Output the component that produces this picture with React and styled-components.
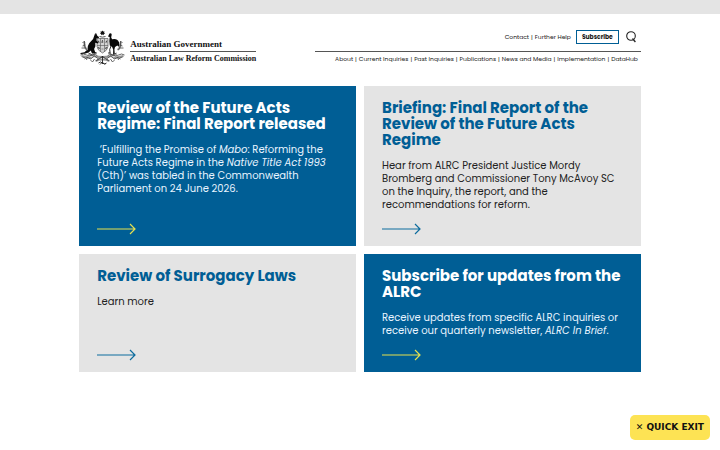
import styled, { createGlobalStyle } from "styled-components";

const topics = [
  {
    title: "Review of the Future Acts Regime: Final Report released",
    text: (
      <>
        &nbsp;‘Fulfilling the Promise of <em>Mabo</em>: Reforming the Future Acts Regime in the{" "}
        <em>Native Title Act 1993</em> (Cth)’ was tabled in the Commonwealth Parliament on 24 June 2026.
      </>
    ),
    dark: true,
  },
  {
    title: "Briefing: Final Report of the Review of the Future Acts Regime",
    text: "Hear from ALRC President Justice Mordy Bromberg and Commissioner Tony McAvoy SC on the Inquiry, the report, and the recommendations for reform.",
    dark: false,
  },
  {
    title: "Review of Surrogacy Laws",
    text: "Learn more",
    dark: false,
  },
  {
    title: "Subscribe for updates from the ALRC",
    text: (
      <>
        Receive updates from specific ALRC inquiries or receive our quarterly newsletter, <em>ALRC In Brief</em>.
      </>
    ),
    dark: true,
  },
];

const pages = [
  "About",
  "Current Inquiries",
  "Past Inquiries",
  "Publications",
  "News and Media",
  "Implementation",
  "DataHub",
];

const CoatOfArms = () => (
  <svg width="47" height="36" viewBox="0 0 46 36" fill="none" stroke="#111" aria-hidden="true">
    {/* star and wreath */}
    <path d="M23 .5l.7 1.1 1.4-.2-.5 1.3 1 .9-1.3.4-.1 1.2-1.2-.7-1.2.7-.1-1.2-1.3-.4 1-.9-.5-1.3 1.4.2z" fill="#111" stroke="none" />
    <path d="M20 6.5q3 1.2 6 0" strokeWidth="1" stroke="#555" />
    {/* shield */}
    <path d="M17.5 8.5h11v8q-.5 4-5.500 6.500q-5-2.500-5.500-6.500z" strokeWidth=".6" stroke="#444" fill="#d4d4d4" />
    <path d="M17.5 15.5h11M21 8.5v13M25 8.5v13M18 12h2m2 0h2m2 0h2M18 18h2m2 1h2m2-1h2" strokeWidth=".6" stroke="#555" />
    <path d="M18.5 10.5l1 2M23 10l-.5 3M27.5 10.5l-1 2M19 17l1 2M27 17l-1 2" strokeWidth=".8" stroke="#333" />
    {/* kangaroo */}
    <path d="M15.8 2.8l.8 2.2.7-1.9.4 2.600 1.800 1.300-.2 1-2.200.2-.2 2.400 2 2-.5.8-2.600-.7.1 3.600-1.300 2.700 1 3.100 1.800.6-.2.8H12.500l-1.200-3-2.200 2-4 1.300-4.100.1v-.8l4-.9 3-2.900q-.1-3.500 1.700-6l3.900-4.400z" fill="#0a0a0a" stroke="none" />
    {/* emu */}
    <path d="M30 3.6q1.1-1 2 .2.5 1.1-.1 2.300-.7 2 .8 3.200 4.900-1.200 6.800 3l.9 5.200-2.600-1.900-2.300 1.300-.6 2.500.3 3.600 1.500.6v.8h-3.100l.1-5-1.200-2.600-2.200-1.400q-1-4.300-.1-8.500l-1.700-.5z" fill="#0a0a0a" stroke="none" />
    <path d="M31.5 16l-1.3 3.5.4 3.500h-2" strokeWidth=".9" />
    {/* wattle */}
    <g stroke="#999" strokeWidth="2">
      <path d="M5 12q-1 5 3 8M41 12q1 5-3 8M9 24q6 3 14 3t14-3M2 26q5 1 10 2M44 26q-5 1-10 2M16 31q7-3 14 0" />
    </g>
    <g strokeWidth=".8" stroke="#444">
      <path d="M7 20q-3-4-2-9M3 13l2-2m-2 5l3-1m-4 3l4 0M39 20q3-4 2-9M43 13l-2-2m2 5l-3-1m4 3l-4 0" />
      <path d="M1 25q3-2 6 0t6 0 5 1M45 25q-3-2-6 0t-6 0-5 1M5 29q3-3 6 0l4-3 4 3M41 29q-3-3-6 0l-4-3-4 3" />
      <path d="M3 27l3 1m2-1l-1 3m4 0l2 2 2-3m28-2l-3 1m-2-1l1 3m-4 0l-2 2-2-3M9 23l4 2 3-2m21 0l-4 2-3-2" />
    </g>
    <path d="M17 31q1-2 3-2.5t3-2.5q1 2 3 2.5t3 2.5M19 33q2-2 4 0t4 0M23 26v8M20.5 34.5l2-2m3 2l-2-2" strokeWidth=".9" stroke="#222" />
  </svg>
);

const Arrow = () => (
  <svg width="39" height="12" viewBox="0 0 39 12" fill="none" stroke="currentColor" aria-hidden="true">
    <path d="M0 6h38M33 1l5 5-5 5" strokeWidth="1.2" />
  </svg>
);

const App = () => {
  return (
    <>
      <GlobalStyle />
      <TopBar />
      <Page>
        <Header>
          <Brand href="#">
            <CoatOfArms />
            <BrandText>
              <Government>Australian Government</Government>
              <Commission>Australian Law Reform Commission</Commission>
            </BrandText>
          </Brand>
          <Navigation>
            <Tools>
              <LinkList>
                <li><a href="#">Contact</a></li>
                <li><a href="#">Further Help</a></li>
              </LinkList>
              <Subscribe type="button">Subscribe</Subscribe>
              <SearchButton type="button" aria-label="Search">
                <svg width="11" height="12" viewBox="0 0 11 12" fill="none" stroke="#222" aria-hidden="true">
                  <circle cx="5" cy="5" r="4.3" strokeWidth="1.1" />
                  <path d="M6.5 7.5l2.9 3.5" strokeWidth="1.3" />
                </svg>
              </SearchButton>
            </Tools>
            <MainNav>
              <LinkList>
                {pages.map((page) => (
                  <li key={page}><a href="#">{page}</a></li>
                ))}
              </LinkList>
            </MainNav>
          </Navigation>
        </Header>
        <Grid>
          {topics.map(({ title, text, dark }) => (
            <Card key={title} href="#" $dark={dark}>
              <h2>{title}</h2>
              <p>{text}</p>
              <Arrow />
            </Card>
          ))}
        </Grid>
      </Page>
      <QuickExit type="button">✕ QUICK EXIT</QuickExit>
    </>
  );
};

const GlobalStyle = createGlobalStyle`
  * {
    box-sizing: border-box;
    margin: 0;
    padding: 0;
  }

  body {
    background: #fff;
    color: #222;
    font-family: Poppins, Inter, sans-serif;
  }

  a {
    color: inherit;
    text-decoration: none;
  }

  button {
    font-family: inherit;
    cursor: pointer;
  }
`;

const TopBar = styled.div`
  height: 14px;
  background: #e4e4e4;
`;

const Page = styled.main`
  width: 78%;
  margin: 0 auto;
`;

const Header = styled.header`
  display: flex;
  justify-content: space-between;
  padding: 16px 0 20px;
`;

const Brand = styled.a`
  display: flex;
  align-items: flex-start;
  gap: 4px;
`;

const BrandText = styled.div`
  padding-top: 7px;
  color: #111;
  font-family: "Liberation Serif", serif;
  font-weight: 700;
  line-height: 14px;
  white-space: nowrap;
`;

const Government = styled.div`
  font-size: 9px;
  border-bottom: 1px solid #555;
`;

const Commission = styled.div`
  font-size: 8px;
`;

const Navigation = styled.div`
  width: 58%;
`;

const Tools = styled.div`
  display: flex;
  justify-content: flex-end;
  align-items: center;
  gap: 5px;
  padding: 0 4px 7px 0;
  border-bottom: 1px solid #555;
`;

const MainNav = styled.nav`
  display: flex;
  justify-content: flex-end;
  padding: 2px 3px 0 0;
`;

const LinkList = styled.ul`
  display: flex;
  list-style: none;
  font-size: 6px;
  line-height: 10px;
  white-space: nowrap;

  li + li::before {
    content: "|";
    margin: 0 2px;
  }
`;

const Subscribe = styled.button`
  padding: 0 5px;
  border: 1px solid #005e95;
  background: #fff;
  color: #111;
  font-size: 6px;
  font-weight: 700;
  line-height: 12px;
`;

const SearchButton = styled.button`
  display: flex;
  margin-left: 2px;
  border: 0;
  background: none;
`;

const Grid = styled.section`
  display: grid;
  grid-template-columns: 1fr 1fr;
  gap: 8px;
`;

const Card = styled.a`
  display: flex;
  flex-direction: column;
  padding: 14px 18px 11px;
  background: ${({ $dark }) => ($dark ? "#005e95" : "#e4e4e4")};
  color: ${({ $dark }) => ($dark ? "#e8f4ff" : "#222")};

  h2 {
    margin-bottom: 11px;
    color: ${({ $dark }) => ($dark ? "#fff" : "#005e95")};
    font-size: 15px;
    font-weight: 700;
    line-height: 16px;
  }

  p {
    margin-bottom: 12px;
    font-size: 10px;
    line-height: 13px;
  }

  svg {
    margin-top: auto;
    color: ${({ $dark }) => ($dark ? "#e5e04f" : "#0d6c9e")};
  }
`;

const QuickExit = styled.button`
  position: fixed;
  right: 10px;
  bottom: 10px;
  padding: 0 6px;
  border: 0;
  border-radius: 5px;
  background: #fde354;
  color: #111;
  font: bold 9px/25px "DejaVu Sans", sans-serif;
`;

export default App;
